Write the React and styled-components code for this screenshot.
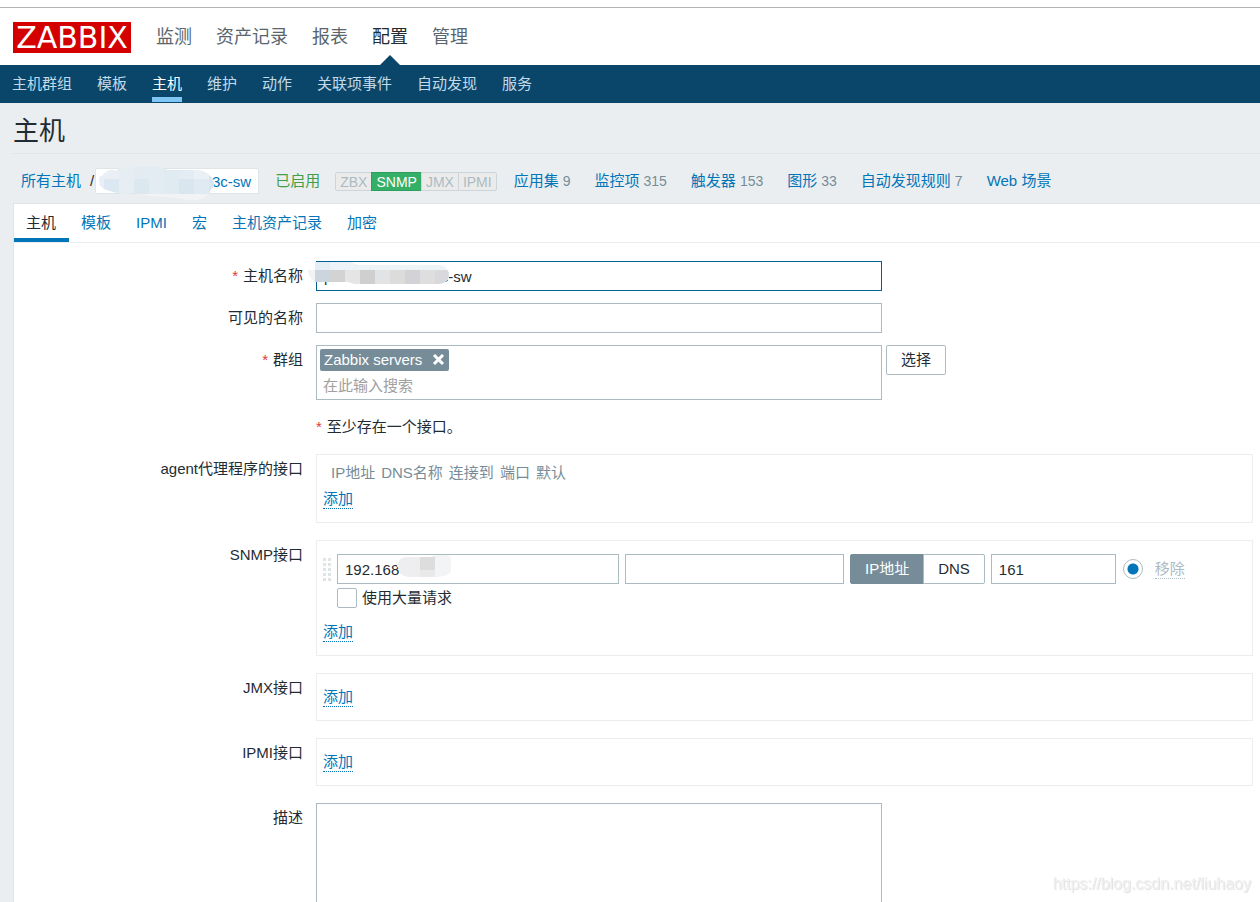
import React, { useState } from 'react'
import styled, { createGlobalStyle, css } from 'styled-components'

const GlobalStyle = createGlobalStyle`
  * {
    box-sizing: border-box;
  }
  body {
    margin: 0;
    background: #ebeef0;
    color: #1f2c33;
    font-family: 'Liberation Sans', 'Noto Sans CJK SC', sans-serif;
    font-size: 15px;
    line-height: 20px;
  }
  input,
  button,
  textarea {
    font: inherit;
    color: inherit;
  }
  a {
    color: #0275b8;
    text-decoration: none;
  }
`

const Header = styled.header`
  background: #fff;
  padding-top: 7px;
`

const TopBar = styled.div`
  display: flex;
  align-items: center;
  gap: 25px;
  height: 58px;
  padding: 2px 0 0 13px;
  border-top: 1px solid #b4b4b4;
`

const Logo = styled.a`
  width: 118px;
  height: 31px;
  background: #d40000;
  color: #fff;
  font-family: 'DejaVu Sans', sans-serif;
  font-size: 30px;
  line-height: 31px;
  text-align: center;
`

const MainMenu = styled.nav`
  display: flex;
  gap: 24px;
  height: 100%;
`

const MainLink = styled.a`
  position: relative;
  color: ${(props) => (props.$active ? '#1f2c33' : '#5a666d')};
  font-size: 18px;
  line-height: 54px;

  ${(props) =>
    props.$active &&
    css`
      &::after {
        content: '';
        position: absolute;
        bottom: 0;
        left: 50%;
        margin-left: -10px;
        border: 10px solid transparent;
        border-top-width: 0;
        border-bottom-color: #0a466a;
      }
    `}
`

const SubMenu = styled.nav`
  display: flex;
  gap: 25px;
  height: 38px;
  padding-left: 12px;
  background: #0a466a;
`

const SubLink = styled.a`
  height: 37px;
  color: ${(props) => (props.$active ? '#fff' : '#c3dbe8')};
  line-height: 37px;
  border-bottom: 5px solid
    ${(props) => (props.$active ? '#7fc6f5' : 'transparent')};
`

const Content = styled.main`
  padding-left: 13px;
`

const Title = styled.h1`
  margin: 0 0 14px;
  padding: 8px 0 2px;
  border-bottom: 1px solid #dfe4e7;
  font-size: 26px;
  font-weight: normal;
  line-height: 40px;
`

const HostBar = styled.div`
  display: flex;
  align-items: center;
  height: 26px;
  margin-bottom: 9px;
  padding-left: 8px;
`

const Separator = styled.span`
  padding: 0 1px 0 9px;
`

const HostCrumb = styled.a`
  position: relative;
  width: 164px;
  height: 26px;
  padding-right: 7px;
  background: #fff;
  border: 1px solid #dfe4e7;
  border-radius: 2px;
  line-height: 26px;
  text-align: right;
`

const Enabled = styled.a`
  margin: 0 15px 0 16px;
  color: #429e47;
`

const StatusList = styled.div`
  display: flex;
  margin-right: 17px;
`

const Status = styled.span`
  height: 19px;
  padding: 0 4px;
  background: ${(props) => (props.$on ? '#34af67' : '#ebebeb')};
  border: 1px solid ${(props) => (props.$on ? '#2f9f5e' : '#ccd5d9')};
  color: ${(props) => (props.$on ? '#fff' : '#acbbc2')};
  font-size: 14px;
  line-height: 18px;

  & + & {
    margin-left: -1px;
  }
  &:first-child {
    border-radius: 2px 0 0 2px;
  }
  &:last-child {
    border-radius: 0 2px 2px 0;
  }
`

const Counters = styled.div`
  display: flex;
  gap: 24px;
`

const Count = styled.sup`
  margin-left: 4px;
  color: #768d99;
  font-size: 14px;
  vertical-align: baseline;
`

const Panel = styled.section`
  background: #fff;
  border: 1px solid #dfe4e7;
  border-right: 0;
`

const Tabs = styled.div`
  display: flex;
  height: 39px;
  border-bottom: 1px solid #ebeef0;
`

const Tab = styled.button`
  padding: 0 13px 0 12px;
  background: none;
  border: 0;
  border-bottom: 4px solid
    ${(props) => (props.$active ? '#0275b8' : 'transparent')};
  border-top: 4px solid transparent;
  color: ${(props) => (props.$active ? '#1f2c33' : '#0275b8')};
  cursor: pointer;
`

const Form = styled.form`
  display: flex;
  flex-direction: column;
  gap: 12px;
  padding: 18px 7px 12px 0;
`

const FormRow = styled.div`
  display: grid;
  grid-template-columns: 289px 1fr;
  column-gap: 13px;
`

const Label = styled.label`
  line-height: 30px;
  text-align: right;
`

const Star = styled.span`
  margin-right: 5px;
  color: #e33734;
`

const Field = styled.div`
  position: relative;
  display: flex;
  align-items: flex-start;
  gap: 4px;
`

const inputStyle = css`
  background: #fff;
  border: 1px solid #acbbc2;
  border-radius: 0;
  outline: 0;
`

const TextInput = styled.input`
  ${inputStyle}
  width: ${(props) => props.$width || 566}px;
  height: 30px;
  padding: 0 7px;

  &:focus {
    border-color: #006199;
  }
`

const TextArea = styled.textarea`
  ${inputStyle}
  width: 566px;
  height: 150px;
  padding: 4px 7px;
  resize: none;
`

const MultiSelect = styled.div`
  ${inputStyle}
  width: 566px;
  height: 55px;
  padding: 3px;
`

const Tag = styled.span`
  display: flex;
  align-items: center;
  justify-content: space-between;
  width: 129px;
  height: 22px;
  padding: 0 4px;
  background: #768d99;
  border-radius: 2px;
  color: #fff;
`

const TagRemove = styled.button`
  display: flex;
  padding: 0;
  background: none;
  border: 0;
  color: #fff;
`

const SearchInput = styled.input`
  width: 100%;
  height: 26px;
  padding: 2px 3px 0;
  background: none;
  border: 0;
  outline: 0;

  &::placeholder {
    color: #a0a0a0;
    opacity: 1;
  }
`

const SelectButton = styled.button`
  width: 60px;
  height: 30px;
  padding: 0;
  background: #fff;
  border: 1px solid #acbbc2;
  border-radius: 2px;
`

const Note = styled.div`
  line-height: 30px;
`

const InterfaceBox = styled.div`
  margin-bottom: 5px;
  padding: 5px 6px 13px;
  border: 1px solid #ebeef0;
`

const HeadTable = styled.table`
  margin-left: 8px;
  border-collapse: collapse;

  th {
    padding: 4px 6px 0 0;
    color: #768d99;
    font-weight: normal;
    line-height: 17px;
  }
`

const DottedButton = styled.button`
  display: block;
  margin-top: ${(props) => (props.$inline ? 0 : 9)}px;
  padding: 0;
  background: none;
  border: 0;
  border-bottom: 1px dotted;
  color: #0275b8;
  line-height: 18px;

  &:disabled {
    color: #acbbc2;
  }
`

const InterfaceRow = styled.div`
  display: flex;
  align-items: center;
  gap: 6px;
  padding-top: 8px;
`

const DragHandle = styled.svg`
  flex: none;
  width: 8px;
  height: 24px;
  fill: #dfe4e7;
`

const InputWrap = styled.div`
  position: relative;
  display: flex;
`

const Toggle = styled.div`
  display: flex;
`

const ToggleLabel = styled.label`
  padding: 0 14px;
  border: 1px solid #acbbc2;
  border-radius: 0 2px 2px 0;
  line-height: 28px;

  & + & {
    margin-left: -1px;
  }
  &:first-child {
    border-radius: 2px 0 0 2px;
  }
  &:has(input:checked) {
    background: #768d99;
    border-color: #768d99;
    color: #fff;
  }
  input {
    position: absolute;
    opacity: 0;
    pointer-events: none;
  }
`

const Radio = styled.input`
  appearance: none;
  width: 20px;
  height: 20px;
  margin: 0 6px 0 1px;
  background: #fff;
  border: 1px solid #acbbc2;
  border-radius: 50%;

  &:checked {
    background: radial-gradient(circle, #0275b8 5px, #fff 6px);
  }
`

const BulkRow = styled.div`
  display: flex;
  align-items: center;
  gap: 5px;
  padding: 4px 0 6px 14px;
`

const Checkbox = styled.input`
  appearance: none;
  width: 20px;
  height: 20px;
  margin: 0;
  background: #fff;
  border: 1px solid #acbbc2;
  border-radius: 2px;

  &:checked {
    background: #0275b8;
  }
`

const Mask = styled.svg`
  position: absolute;
  top: ${(props) => props.$top}px;
  left: ${(props) => props.$left}px;
  pointer-events: none;
`

const Watermark = styled.span`
  position: fixed;
  right: 9px;
  bottom: 8px;
  color: #f0f0f0;
  font-size: 16px;
  text-shadow: 1px 1px 1px #dedede;
`

const mainMenu = ['监测', '资产记录', '报表', '配置', '管理']
const subMenu = [
  '主机群组',
  '模板',
  '主机',
  '维护',
  '动作',
  '关联项事件',
  '自动发现',
  '服务',
]
const statuses = ['ZBX', 'SNMP', 'JMX', 'IPMI']
const counters = [
  { name: '应用集', count: 9 },
  { name: '监控项', count: 315 },
  { name: '触发器', count: 153 },
  { name: '图形', count: 33 },
  { name: '自动发现规则', count: 7 },
  { name: 'Web 场景' },
]
const tabs = ['主机', '模板', 'IPMI', '宏', '主机资产记录', '加密']
const columns = ['IP地址', 'DNS名称', '连接到', '端口', '默认']
const hostName = 'p' + '\u00a0'.repeat(24) + '3c-sw'

function CrumbMask() {
  return (
    <Mask $top={-2} $left={3} width="118" height="34" viewBox="0 0 118 34">
      <clipPath id="crumb-mask">
        <path d="M3 9C7 4 12 1 17 4l4-3 9-1h30l9 3h28c9 0 18 6 18 15-1 4-4 4-4 7-4 7-12 9-22 8-8-1-15-3-22-3-10 0-20-1-30-4-9 0-16 1-23-1-5-2-10-2-13-7-1-3-1-6 0-9z" />
      </clipPath>
      <g clipPath="url(#crumb-mask)">
        <rect width="118" height="34" fill="#f1f3f5" />
        <rect y="1" width="5" height="27" fill="#e9eff4" />
        <rect x="5" y="1" width="15" height="11" fill="#e9eff4" />
        <rect x="5" y="12" width="15" height="14" fill="#dce8f1" />
        <rect x="20" y="0" width="15" height="27" fill="#e6eef3" />
        <rect x="35" y="0" width="15" height="12" fill="#e3ecf2" />
        <rect x="35" y="12" width="15" height="15" fill="#dce8f0" />
        <rect x="50" y="0" width="15" height="27" fill="#e3ecf2" />
        <rect x="65" y="2" width="15" height="25" fill="#e0eaf1" />
        <rect x="80" y="2" width="15" height="10" fill="#e3ecf3" />
        <rect x="80" y="12" width="15" height="15" fill="#d9e6ef" />
        <rect x="95" y="2" width="15" height="10" fill="#eaf0f4" />
        <rect x="95" y="12" width="15" height="15" fill="#e0eaf2" />
        <rect x="110" y="2" width="8" height="25" fill="#d8e6f0" />
      </g>
    </Mask>
  )
}

function NameMask() {
  return (
    <Mask $top={1} $left={-8} width="142" height="23" viewBox="0 0 142 23">
      <clipPath id="name-mask">
        <path d="M0 8h7V0h35l9 3h80c6 0 10 5 10 10s-4 8-9 9H47l-7-2H8C4 19 1 15 0 8z" />
      </clipPath>
      <g clipPath="url(#name-mask)">
        <rect width="142" height="23" fill="#edf4f8" />
        <rect y="8" width="7" height="15" fill="#f2f3f4" />
        <rect x="7" width="15" height="8" fill="#e3eef5" />
        <rect x="7" y="8" width="15" height="15" fill="#ccd5de" />
        <rect x="22" y="8" width="15" height="15" fill="#d3d3d4" />
        <rect x="37" y="8" width="15" height="15" fill="#e5e5e6" />
        <rect x="52" y="8" width="15" height="15" fill="#cfcfd0" />
        <rect x="67" y="8" width="15" height="15" fill="#e2e3e5" />
        <rect x="82" y="8" width="15" height="15" fill="#dcdcdb" />
        <rect x="97" y="8" width="15" height="15" fill="#d2d2d7" />
        <rect x="112" y="8" width="15" height="15" fill="#dededf" />
        <rect x="127" y="8" width="15" height="15" fill="#d9d9dd" />
      </g>
    </Mask>
  )
}

function AddressMask() {
  return (
    <Mask $top={1} $left={60} width="54" height="23" viewBox="0 0 54 23">
      <clipPath id="address-mask">
        <path d="M0 11c1-5 4-9 9-9h26l6-2h8c3 0 5 2 5 5v11c-1 3-4 4-8 5l-6 1H12C6 21 3 19 2 16c1-2-1-3-2-5z" />
      </clipPath>
      <g clipPath="url(#address-mask)">
        <rect width="54" height="23" fill="#f2f3f4" />
        <rect width="8" height="23" fill="#eeeeee" />
        <rect x="8" width="15" height="23" fill="#eeeef0" />
        <rect x="23" width="15" height="15" fill="#dddddd" />
        <rect x="23" y="15" width="15" height="8" fill="#e9e9ea" />
        <rect x="38" width="16" height="23" fill="#f2f4f5" />
      </g>
    </Mask>
  )
}

function Navigation() {
  return (
    <Header>
      <TopBar>
        <Logo href="#">ZABBIX</Logo>
        <MainMenu>
          {mainMenu.map((item) => (
            <MainLink key={item} href="#" $active={item === '配置'}>
              {item}
            </MainLink>
          ))}
        </MainMenu>
      </TopBar>
      <SubMenu>
        {subMenu.map((item) => (
          <SubLink key={item} href="#" $active={item === '主机'}>
            {item}
          </SubLink>
        ))}
      </SubMenu>
    </Header>
  )
}

function HostNavigation() {
  return (
    <HostBar>
      <a href="#">所有主机</a>
      <Separator>/</Separator>
      <HostCrumb href="#">
        3c-sw
        <CrumbMask />
      </HostCrumb>
      <Enabled href="#">已启用</Enabled>
      <StatusList>
        {statuses.map((status) => (
          <Status key={status} $on={status === 'SNMP'}>
            {status}
          </Status>
        ))}
      </StatusList>
      <Counters>
        {counters.map(({ name, count }) => (
          <span key={name}>
            <a href="#">{name}</a>
            {count && <Count>{count}</Count>}
          </span>
        ))}
      </Counters>
    </HostBar>
  )
}

function SnmpInterface() {
  const [connectTo, setConnectTo] = useState('ip')

  return (
    <>
      <InterfaceRow>
        <DragHandle viewBox="0 0 8 24">
          {[0, 5, 10, 15, 20].map((y) => (
            <React.Fragment key={y}>
              <rect x="0" y={y + 1} width="3" height="3" />
              <rect x="5" y={y + 1} width="3" height="3" />
            </React.Fragment>
          ))}
        </DragHandle>
        <InputWrap>
          <TextInput $width={282} aria-label="IP地址" defaultValue="192.168" />
          <AddressMask />
        </InputWrap>
        <TextInput $width={219} aria-label="DNS名称" />
        <Toggle>
          <ToggleLabel>
            <input
              type="radio"
              name="useip"
              checked={connectTo === 'ip'}
              onChange={() => setConnectTo('ip')}
            />
            IP地址
          </ToggleLabel>
          <ToggleLabel>
            <input
              type="radio"
              name="useip"
              checked={connectTo === 'dns'}
              onChange={() => setConnectTo('dns')}
            />
            DNS
          </ToggleLabel>
        </Toggle>
        <TextInput $width={125} aria-label="端口" defaultValue="161" />
        <Radio type="radio" name="default" aria-label="默认" defaultChecked />
        <DottedButton type="button" $inline disabled>
          移除
        </DottedButton>
      </InterfaceRow>
      <BulkRow>
        <Checkbox type="checkbox" id="bulk" />
        <label htmlFor="bulk">使用大量请求</label>
      </BulkRow>
    </>
  )
}

function InterfaceField({ label, children }) {
  return (
    <FormRow>
      <Label as="span">{label}</Label>
      <InterfaceBox>
        {children}
        <DottedButton type="button">添加</DottedButton>
      </InterfaceBox>
    </FormRow>
  )
}

function HostForm() {
  return (
    <Form>
      <FormRow>
        <Label htmlFor="host">
          <Star>*</Star>主机名称
        </Label>
        <Field>
          <TextInput id="host" defaultValue={hostName} autoFocus />
          <NameMask />
        </Field>
      </FormRow>
      <FormRow>
        <Label htmlFor="visible-name">可见的名称</Label>
        <Field>
          <TextInput id="visible-name" />
        </Field>
      </FormRow>
      <FormRow>
        <Label htmlFor="groups">
          <Star>*</Star>群组
        </Label>
        <Field>
          <MultiSelect>
            <Tag>
              Zabbix servers
              <TagRemove type="button" aria-label="移除">
                <svg width="13" height="13" viewBox="0 0 13 13">
                  <path
                    d="M2 1l9 9M11 1l-9 9"
                    stroke="currentColor"
                    strokeWidth="3"
                  />
                </svg>
              </TagRemove>
            </Tag>
            <SearchInput id="groups" placeholder="在此输入搜索" />
          </MultiSelect>
          <SelectButton type="button">选择</SelectButton>
        </Field>
      </FormRow>
      <FormRow>
        <span />
        <Note>
          <Star>*</Star>至少存在一个接口。
        </Note>
      </FormRow>
      <InterfaceField label="agent代理程序的接口">
        <HeadTable>
          <thead>
            <tr>
              {columns.map((column) => (
                <th key={column}>{column}</th>
              ))}
            </tr>
          </thead>
        </HeadTable>
      </InterfaceField>
      <InterfaceField label="SNMP接口">
        <SnmpInterface />
      </InterfaceField>
      <InterfaceField label="JMX接口" />
      <InterfaceField label="IPMI接口" />
      <FormRow>
        <Label htmlFor="description">描述</Label>
        <Field>
          <TextArea id="description" />
        </Field>
      </FormRow>
    </Form>
  )
}

export default function App() {
  const [activeTab, setActiveTab] = useState('主机')

  return (
    <>
      <GlobalStyle />
      <Navigation />
      <Content>
        <Title>主机</Title>
        <HostNavigation />
        <Panel>
          <Tabs role="tablist">
            {tabs.map((tab) => (
              <Tab
                key={tab}
                type="button"
                role="tab"
                aria-selected={tab === activeTab}
                $active={tab === activeTab}
                onClick={() => setActiveTab(tab)}
              >
                {tab}
              </Tab>
            ))}
          </Tabs>
          <HostForm />
        </Panel>
      </Content>
      <Watermark>https://blog.csdn.net/liuhaoy</Watermark>
    </>
  )
}
